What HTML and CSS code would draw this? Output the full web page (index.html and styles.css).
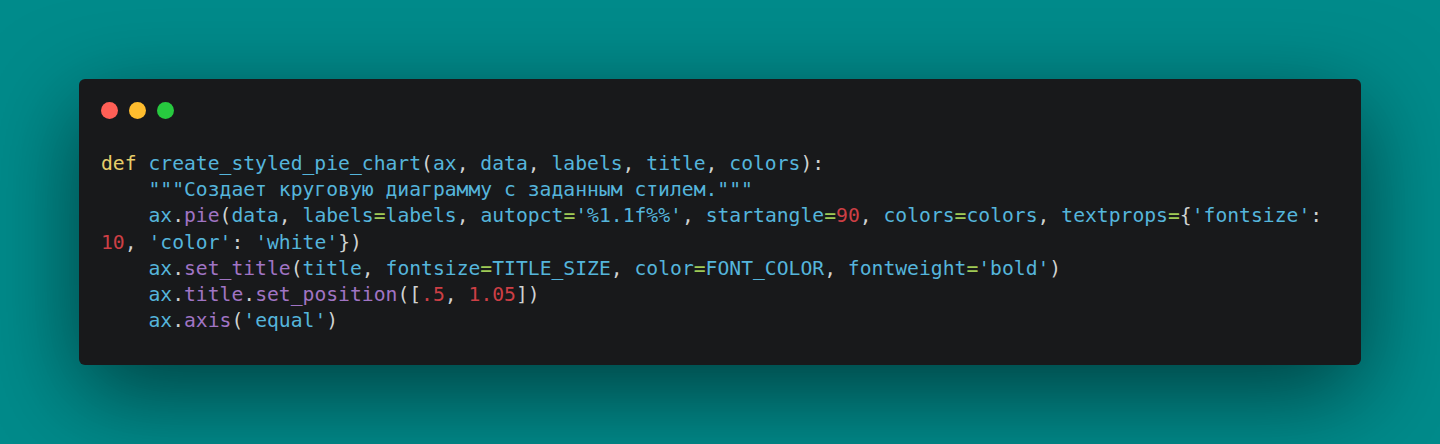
FILE: index.html
```html
<!DOCTYPE html>
<html lang="ru">
<head>
<meta charset="utf-8">
<title>Code</title>
<link rel="stylesheet" href="styles.css">
</head>
<body>
<div class="window">
  <div class="controls">
    <span class="dot red"></span>
    <span class="dot yellow"></span>
    <span class="dot green"></span>
  </div>
<pre class="code"><span class="kw">def</span> <span class="b">create_styled_pie_chart</span><span class="p">(</span><span class="b">ax</span><span class="p">,</span> <span class="b">data</span><span class="p">,</span> <span class="b">labels</span><span class="p">,</span> <span class="b">title</span><span class="p">,</span> <span class="b">colors</span><span class="p">):</span>
    <span class="b">"""Создает круговую диаграмму с заданным стилем."""</span>
    <span class="b">ax</span><span class="p">.</span><span class="pu">pie</span><span class="p">(</span><span class="b">data</span><span class="p">,</span> <span class="b">labels</span><span class="g">=</span><span class="b">labels</span><span class="p">,</span> <span class="b">autopct</span><span class="g">=</span><span class="b">'%1.1f%%'</span><span class="p">,</span> <span class="b">startangle</span><span class="g">=</span><span class="r">90</span><span class="p">,</span> <span class="b">colors</span><span class="g">=</span><span class="b">colors</span><span class="p">,</span> <span class="b">textprops</span><span class="g">=</span><span class="p">{</span><span class="b">'fontsize'</span><span class="p">:</span> <span class="r">10</span><span class="p">,</span> <span class="b">'color'</span><span class="p">:</span> <span class="b">'white'</span><span class="p">})</span>
    <span class="b">ax</span><span class="p">.</span><span class="pu">set_title</span><span class="p">(</span><span class="b">title</span><span class="p">,</span> <span class="b">fontsize</span><span class="g">=</span><span class="b">TITLE_SIZE</span><span class="p">,</span> <span class="b">color</span><span class="g">=</span><span class="b">FONT_COLOR</span><span class="p">,</span> <span class="b">fontweight</span><span class="g">=</span><span class="b">'bold'</span><span class="p">)</span>
    <span class="b">ax</span><span class="p">.</span><span class="pu">title</span><span class="p">.</span><span class="pu">set_position</span><span class="p">([</span><span class="r">.5</span><span class="p">,</span> <span class="r">1.05</span><span class="p">])</span>
    <span class="b">ax</span><span class="p">.</span><span class="pu">axis</span><span class="p">(</span><span class="b">'equal'</span><span class="p">)</span></pre>
</div>
</body>
</html>
```

FILE: styles.css
```css
html, body {
  margin: 0;
  padding: 0;
}

body {
  background: #008b8b;
  padding: 79px 79px 80px 79px;
  min-height: 444px;
  box-sizing: border-box;
}

.window {
  background: #18191b;
  border-radius: 6px;
  box-shadow: 0 28px 95px rgba(0, 0, 0, 0.55);
  padding: 22px 22px 31px 22px;
}

.controls {
  display: flex;
  gap: 11px;
  height: 17px;
  padding-top: 1px;
}

.dot {
  width: 17px;
  height: 17px;
  border-radius: 50%;
  display: block;
}

.red { background: #ff5f56; }
.yellow { background: #ffbd2e; }
.green { background: #27c93f; }

.code {
  margin: 32px 0 0 0;
  font-family: "DejaVu Sans Mono", "Liberation Mono", monospace;
  font-size: 19.7px;
  line-height: 26.2px;
  color: #cfd2d1;
  white-space: pre-wrap;
  word-break: normal;
}

.kw { color: #e6cd69; }
.b { color: #55b5db; }
.p { color: #cfd2d1; }
.g { color: #9fca56; }
.pu { color: #a074c4; }
.r { color: #cd3f45; }
```
